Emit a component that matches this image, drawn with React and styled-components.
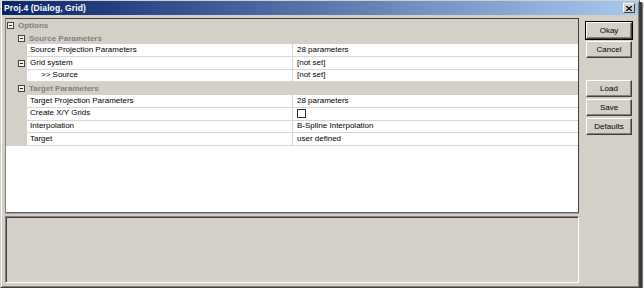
import React from "react";
import styled, { createGlobalStyle } from "styled-components";

const GlobalStyle = createGlobalStyle`
  body {
    margin: 0;
    background: #ffffff;
    font-family: "Liberation Sans", Arial, sans-serif;
  }
`;

const Window = styled.div`
  box-sizing: border-box;
  width: 640px;
  height: 288px;
  background: #d4d0c8;
  border: 1px solid;
  border-color: #d4d0c8 #404040 #404040 #d4d0c8;
  box-shadow: inset 1px 1px #ffffff, inset -1px -1px #808080,
    2px 2px 0 #3a3a3a, 3px 3px 1px rgba(0, 0, 0, 0.55);
  display: flex;
  flex-direction: column;
`;

const TitleBar = styled.div`
  height: 14px;
  margin: 0 1px;
  padding: 0 2px 0 2px;
  display: flex;
  align-items: center;
  justify-content: space-between;
  background: linear-gradient(to right, #0a246a, #a6caf0);
`;

const Title = styled.span`
  color: #ffffff;
  font-weight: bold;
  font-size: 8.5px;
  letter-spacing: 0.1px;
`;

const CloseBox = styled.div`
  box-sizing: border-box;
  width: 12px;
  height: 10px;
  margin-right: 1px;
  background: #d4d0c8;
  border: 1px solid;
  border-color: #ffffff #404040 #404040 #ffffff;
  display: flex;
  align-items: center;
  justify-content: center;
`;

const Body = styled.div`
  display: flex;
  padding: 3px 0 0 4px;
`;

const LeftCol = styled.div`
  width: 574px;
  display: flex;
  flex-direction: column;
  gap: 3px;
`;

const GridPanel = styled.div`
  box-sizing: border-box;
  height: 195px;
  background: #ffffff;
  border: 1px solid;
  border-color: #404040 #404040 #606060 #808080;
  box-shadow: 0 1px 0 #a0a0a0;
  overflow: hidden;
`;

const InfoPanel = styled.div`
  box-sizing: border-box;
  height: 67px;
  border: 1px solid;
  border-color: #808080 #ffffff #ffffff #808080;
  box-shadow: inset 1px 1px #404040, inset -1px -1px #d4d0c8;
`;

const RightCol = styled.div`
  width: 46px;
  margin-left: 7px;
  padding-top: 4px;
  display: flex;
  flex-direction: column;
  gap: 2px;
`;

const Spacer = styled.div`
  height: 18px;
`;

const Button = styled.button`
  box-sizing: border-box;
  height: 17px;
  padding: 0;
  font-family: "Liberation Sans", Arial, sans-serif;
  font-size: 8px;
  color: #000000;
  background: #d4d0c8;
  border: 1px solid;
  border-color: #ffffff #404040 #404040 #ffffff;
  box-shadow: inset -1px -1px #808080;
  ${(p) =>
    p.primary &&
    `
    outline: 1px solid #000;
    outline-offset: 0;
  `}
`;

const Row = styled.div`
  display: grid;
  grid-template-columns: 21px 265px 1fr;
  height: 12.7px;
  font-size: 8px;
  line-height: 12.7px;
  color: #000000;
`;

const HeaderRow = styled.div`
  display: flex;
  align-items: center;
  height: 12.7px;
  background: #d4d0c8;
  padding-left: ${(p) => p.indent}px;
  gap: 4px;
  font-size: 8px;
  font-weight: bold;
  color: #808080;
`;

const Gutter = styled.div`
  background: #d4d0c8;
  display: flex;
  align-items: center;
  padding-left: 12px;
`;

const Cell = styled.div`
  box-sizing: border-box;
  background: #ffffff;
  border-bottom: 1px solid #d8d6d0;
  padding-left: ${(p) => p.pad || 3}px;
  white-space: nowrap;
  overflow: hidden;
  display: flex;
  align-items: center;
  ${(p) => p.value && "border-left: 1px solid #d8d6d0;"}
`;

const Check = styled.span`
  box-sizing: border-box;
  width: 9px;
  height: 9px;
  border: 1px solid #303030;
  background: #ffffff;
`;

const Minus = () => (
  <svg width="7" height="7" viewBox="0 0 7 7">
    <rect x="0.5" y="0.5" width="6" height="6" fill="#f4f4f4" stroke="#404040" />
    <line x1="2" y1="3.5" x2="5" y2="3.5" stroke="#202020" />
  </svg>
);

const rows = [
  { type: "header", indent: 1, label: "Options" },
  { type: "header", indent: 12, label: "Source Parameters" },
  { type: "item", label: "Source Projection Parameters", value: "28 parameters" },
  { type: "item", label: "Grid system", value: "[not set]", toggle: true },
  { type: "item", label: ">> Source", value: "[not set]", pad: 14 },
  { type: "header", indent: 12, label: "Target Parameters" },
  { type: "item", label: "Target Projection Parameters", value: "28 parameters" },
  { type: "item", label: "Create X/Y Grids", check: true },
  { type: "item", label: "Interpolation", value: "B-Spline Interpolation" },
  { type: "item", label: "Target", value: "user defined" },
];

const App = () => {
  return (
    <>
      <GlobalStyle />
      <Window>
        <TitleBar>
          <Title>Proj.4 (Dialog, Grid)</Title>
          <CloseBox>
            <svg width="6" height="5" viewBox="0 0 6 5">
              <path d="M0 0L6 5M6 0L0 5" stroke="#000" strokeWidth="1.3" />
            </svg>
          </CloseBox>
        </TitleBar>
        <Body>
          <LeftCol>
            <GridPanel>
              {rows.map((r, i) =>
                r.type === "header" ? (
                  <HeaderRow key={i} indent={r.indent}>
                    <Minus />
                    {r.label}
                  </HeaderRow>
                ) : (
                  <Row key={i}>
                    <Gutter>{r.toggle && <Minus />}</Gutter>
                    <Cell pad={r.pad}>{r.label}</Cell>
                    <Cell value pad={4}>
                      {r.check ? <Check /> : r.value}
                    </Cell>
                  </Row>
                )
              )}
            </GridPanel>
            <InfoPanel />
          </LeftCol>
          <RightCol>
            <Button primary>Okay</Button>
            <Button>Cancel</Button>
            <Spacer />
            <Button>Load</Button>
            <Button>Save</Button>
            <Button>Defaults</Button>
          </RightCol>
        </Body>
      </Window>
    </>
  );
};

export default App;
